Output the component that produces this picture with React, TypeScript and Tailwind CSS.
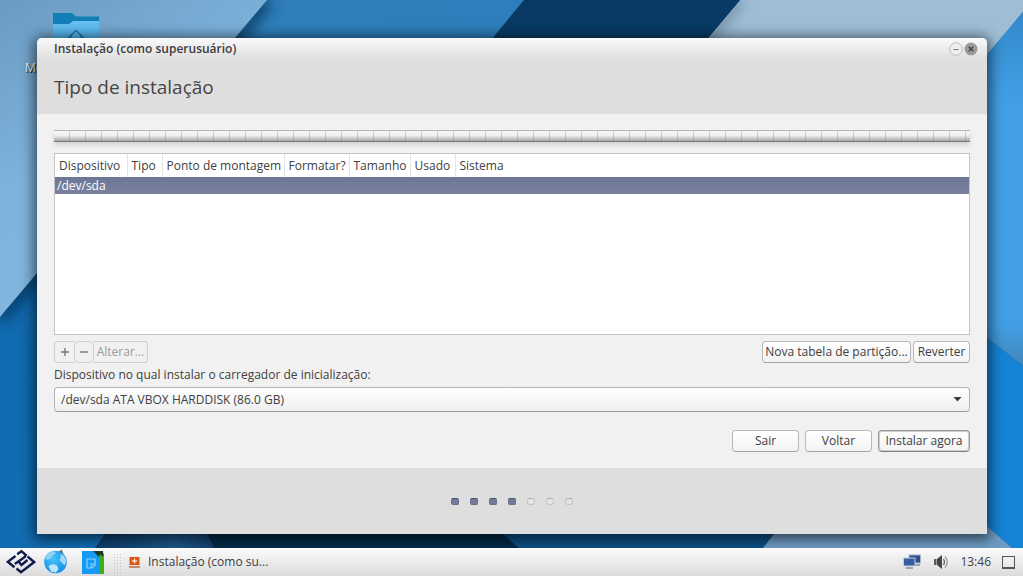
import { useState, type ReactNode } from "react";

const columns = [
  { label: "Dispositivo", width: "w-[72px]" },
  { label: "Tipo", width: "w-[35px]" },
  { label: "Ponto de montagem", width: "w-[122px]" },
  { label: "Formatar?", width: "w-[65px]" },
  { label: "Tamanho", width: "w-[61px]" },
  { label: "Usado", width: "w-[45px]" },
  { label: "Sistema", width: "w-auto" },
];

const steps = [true, true, true, true, false, false, false];

function Wallpaper() {
  return (
    <svg
      className="absolute inset-0 h-full w-full"
      viewBox="0 0 1023 548"
      preserveAspectRatio="none"
      aria-hidden="true"
    >
      <defs>
        <linearGradient id="sky" x1="0" y1="0" x2="0.5" y2="1">
          <stop offset="0" stopColor="#6b9bc2" />
          <stop offset="0.5" stopColor="#7fb3dc" />
          <stop offset="1" stopColor="#80b8e0" />
        </linearGradient>
        <linearGradient id="deep" x1="0" y1="0" x2="0" y2="1">
          <stop offset="0" stopColor="#0a5592" />
          <stop offset="0.3" stopColor="#0f69ae" />
          <stop offset="1" stopColor="#126cb2" />
        </linearGradient>
        <linearGradient id="mid" x1="0" y1="0" x2="1" y2="0">
          <stop offset="0" stopColor="#1b5b90" />
          <stop offset="0.25" stopColor="#2f7fba" />
          <stop offset="1" stopColor="#2e7ebb" />
        </linearGradient>
        <linearGradient id="bright" x1="0" y1="0" x2="0" y2="1">
          <stop offset="0" stopColor="#3389cb" />
          <stop offset="0.25" stopColor="#429fe5" />
          <stop offset="0.88" stopColor="#429fe5" />
          <stop offset="1" stopColor="#4386ba" />
        </linearGradient>
        <linearGradient id="dusk" x1="0" y1="0" x2="1" y2="0">
          <stop offset="0" stopColor="#0b3d68" />
          <stop offset="0.6" stopColor="#1d5688" />
          <stop offset="1" stopColor="#0d3a60" />
        </linearGradient>
        <filter id="soft" x="-20%" y="-20%" width="140%" height="140%">
          <feGaussianBlur stdDeviation="7" />
        </filter>
      </defs>
      <rect width="1023" height="548" fill="#0d5186" />
      <path d="M267 0H540V548H0V317Z" fill="url(#mid)" />
      <path d="M0 317V548H300V0Z" fill="url(#deep)" />
      <path d="M267 0H524L300 270H40Z" fill="url(#mid)" />
      <path d="M267 0L0 317" stroke="#06304f" strokeOpacity="0.7" strokeWidth="16" filter="url(#soft)" />
      <path d="M0 0H267L0 317Z" fill="url(#sky)" />
      <path d="M524 0H740L500 285H288Z" fill="#083a63" />
      <path d="M740 0H1023V12L700 395H408Z" fill="#9fbed6" />
      <path d="M740 0L650 107" stroke="#38536a" strokeOpacity="0.6" strokeWidth="8" filter="url(#soft)" />
      <path d="M740 0L650 107L500 285L524 0Z" fill="#083a63" />
      <path d="M1023 12V366L987 338L900 300V157Z" fill="url(#bright)" />
      <path d="M1023 366V548H1012L900 450V270L987 338Z" fill="#1583d6" />
      <path d="M105 534L160 460H230L207 534L217 548H95Z" fill="url(#dusk)" />
      <path d="M200 520H490L504 534L519 548H214Z" fill="#022b47" />
      <path d="M490 520H785L763 548H519Z" fill="#0b5085" />
      <path d="M785 520H980L1012 548H763Z" fill="#6f9cc4" />
    </svg>
  );
}

function HomeFolder() {
  return (
    <div className="absolute top-3 left-[25px]">
      <svg width="46" height="40" viewBox="0 0 46 40" className="ml-7" aria-hidden="true">
        <defs>
          <linearGradient id="folder" x1="0" y1="0" x2="0" y2="1">
            <stop offset="0" stopColor="#68c1f3" />
            <stop offset="1" stopColor="#3ca6e6" />
          </linearGradient>
        </defs>
        <path d="M0 1H19L23 4.500H46V20H0Z" fill="#137db8" />
        <path d="M0 12H16L20 9H46V40H0Z" fill="url(#folder)" />
        <path d="M15 26L23 18.500L31 26M18 24V34H28V24" fill="none" stroke="#1c6fa5" strokeWidth="1.200" />
      </svg>
      <span className="mt-2 block text-[12px] leading-4 text-white [text-shadow:1px_1px_1px_#000]">Me</span>
    </div>
  );
}

function PushButton({ children, className = "" }: { children: ReactNode; className?: string }) {
  return (
    <button
      type="button"
      className={`h-[22px] rounded-[4px] border bg-linear-to-b from-white to-[#f3f3f3] text-center leading-4 whitespace-nowrap ${className}`}
    >
      {children}
    </button>
  );
}

function TitleBar() {
  return (
    <div className="flex h-[22px] items-center justify-between bg-linear-to-b from-[#fafafa] to-[#dedede] pr-[9px] pl-[17px]">
      <h1 className="text-[12px] leading-4 font-semibold text-[#3c3c3c]">Instalação (como superusuário)</h1>
      <div className="flex gap-px">
        <button type="button" aria-label="Minimizar" className="size-[14px]">
          <svg viewBox="0 0 14 14" className="size-[14px]">
            <circle cx="7" cy="7" r="6.300" fill="#f0efed" stroke="#bdbbb7" />
            <path d="M4.500 7.500H9.500" stroke="#777" />
          </svg>
        </button>
        <button type="button" aria-label="Fechar" className="size-[14px]">
          <svg viewBox="0 0 14 14" className="size-[14px]">
            <circle cx="7" cy="7" r="6.500" fill="#9b9b9b" />
            <path d="M4.700 4.700L9.300 9.300M9.300 4.700L4.700 9.300" stroke="#444" strokeWidth="1.300" />
          </svg>
        </button>
      </div>
    </div>
  );
}

function DeviceTable() {
  return (
    <div className="mt-[11px] min-h-[160px] flex-1 border border-[#c4c4c4] bg-white">
      <table className="w-full table-fixed border-collapse text-left">
        <thead>
          <tr className="h-[23px]">
            {columns.map((c) => (
              <th
                key={c.label}
                scope="col"
                className={`${c.width} border-r border-[#e4e4e4] pl-1 font-normal whitespace-nowrap last:border-r-0`}
              >
                {c.label}
              </th>
            ))}
          </tr>
        </thead>
        <tbody>
          <tr className="h-[17px] bg-linear-to-b from-[#6c7593] to-[#7a82a0] text-white">
            <td colSpan={7} className="pl-0.5 leading-4">
              /dev/sda
            </td>
          </tr>
        </tbody>
      </table>
    </div>
  );
}

function InstallerWindow() {
  const [device, setDevice] = useState("sda");
  return (
    <main className="relative mt-[38px] mr-9 mb-[14px] ml-[37px] flex flex-1 flex-col overflow-hidden rounded-t-[5px] bg-[#f1f1f1] shadow-[0_2px_14px_3px_rgba(0,0,0,0.6)]">
      <TitleBar />
      <header className="flex h-[54px] items-center bg-[#dedede] px-[17px]">
        <h2 className="text-[19px] leading-7 text-[#454545]">Tipo de instalação</h2>
      </header>

      <section className="flex flex-1 flex-col px-[17px] pt-4 pb-4">
        <div
          role="img"
          aria-label="Espaço em disco"
          className="h-3 border-t border-b border-t-[#b5b5b5] border-b-[#777] bg-[repeating-linear-gradient(90deg,transparent_0_15px,rgba(0,0,0,0.14)_15px_16px),linear-gradient(180deg,#f6f6f6_0%,#eeeeee_45%,#a8a8a8_100%)] shadow-[0_3px_4px_rgba(0,0,0,0.12)]"
        />

        <DeviceTable />

        <div className="mt-1.5 flex justify-between">
          <div className="flex text-[#9b9b9b]">
            <button
              type="button"
              disabled
              aria-label="Adicionar"
              className="flex h-[22px] w-5 items-center justify-center rounded-l-[4px] border border-r-0 border-[#cfcfcf]"
            >
              <svg width="10" height="10" viewBox="0 0 10 10">
                <path d="M5 1V9M1 5H9" stroke="#777" strokeWidth="1.400" />
              </svg>
            </button>
            <button
              type="button"
              disabled
              aria-label="Remover"
              className="flex h-[22px] w-5 items-center justify-center rounded-[4px] border border-[#cfcfcf]"
            >
              <svg width="10" height="10" viewBox="0 0 10 10">
                <path d="M1 5H9" stroke="#777" strokeWidth="1.400" />
              </svg>
            </button>
            <button
              type="button"
              disabled
              className="h-[22px] w-[54px] rounded-r-[4px] border border-l-0 border-[#cfcfcf] leading-4"
            >
              Alterar...
            </button>
          </div>
          <div className="flex gap-0.5">
            <PushButton className="w-[149px] border-[#b9b9b9] border-b-[#a3a3a3]">Nova tabela de partição...</PushButton>
            <PushButton className="w-[57px] border-[#b9b9b9] border-b-[#a3a3a3]">Reverter</PushButton>
          </div>
        </div>

        <label htmlFor="bootloader" className="mt-1 leading-4">
          Dispositivo no qual instalar o carregador de inicialização:
        </label>
        <div className="mt-1 grid">
          <select
            id="bootloader"
            value={device}
            onChange={(e) => setDevice(e.target.value)}
            className="col-start-1 row-start-1 h-[25px] appearance-none rounded-[4px] border border-[#b4b4b4] border-b-[#999] bg-linear-to-b from-white to-[#efefef] px-1.5 leading-4"
          >
            <option value="sda">/dev/sda ATA VBOX HARDDISK (86.0 GB)</option>
          </select>
          <svg
            width="9"
            height="5"
            viewBox="0 0 9 5"
            className="pointer-events-none col-start-1 row-start-1 mr-2 self-center justify-self-end"
          >
            <path d="M0.500 0H8.500L4.500 4.500Z" fill="#3c3c3c" />
          </svg>
        </div>

        <div className="mt-[18px] flex justify-end gap-1.5">
          <PushButton className="w-[67px] border-[#b9b9b9] border-b-[#a3a3a3]">Sair</PushButton>
          <PushButton className="w-[67px] border-[#b9b9b9] border-b-[#a3a3a3]">Voltar</PushButton>
          <PushButton className="w-[92px] border-[#999] border-b-[#808080] shadow-[inset_0_0_0_1px_#cccccc]">
            Instalar agora
          </PushButton>
        </div>
      </section>

      <footer className="flex h-[66px] items-center justify-center gap-[11px] bg-[#dedede]">
        {steps.map((done, i) => (
          <span
            key={i}
            className={
              done
                ? "h-[7px] w-2 rounded-[2px] border border-[#6a718c] border-t-[#4a516c] bg-[#737a98]"
                : "h-[7px] w-2 rounded-[3px] border border-[#c4c4c4] border-t-[#aeaeae] bg-[#e4e4e4]"
            }
          />
        ))}
      </footer>
    </main>
  );
}

function Taskbar() {
  return (
    <nav className="relative flex h-7 items-center bg-linear-to-b from-[#fbfbfb] to-[#dcdcdc] px-1.5">
      <button type="button" aria-label="Menu" className="w-[30px]">
        <svg width="30" height="26" viewBox="0 0 30 26" fill="none" stroke="#121b4d" strokeWidth="2.400">
          <path d="M9.500 7L1.800 12.800L8.500 18.200" />
          <path d="M11.200 5.200L15.500 2.200L19.800 6L18.500 8.200L8.800 15" />
          <path d="M12.500 12.500L15.500 16L21.500 11" />
          <path d="M21.500 7.500L28.200 13L15 23.200L10.500 19.500" />
        </svg>
      </button>
      <button type="button" aria-label="Navegador" className="ml-2 w-6">
        <svg width="24" height="26" viewBox="0 0 24 26">
          <defs>
            <radialGradient id="globe" cx="0.4" cy="0.35" r="0.7">
              <stop offset="0" stopColor="#45c4fb" />
              <stop offset="1" stopColor="#168be8" />
            </radialGradient>
          </defs>
          <circle cx="11.500" cy="13" r="11.300" fill="url(#globe)" />
          <path d="M6 3.200L10 2L12 4.500L9 6.500L7 9L4 11L1.500 10Q2 6 6 3.200Z" fill="#8ad4f8" />
          <path d="M16 5L20 7L22.500 12L20.500 16.500L18.500 14.500L15.500 11L17 8Z" fill="#a5daf6" />
          <path d="M4.500 17L9 15L13 16.500L14.500 20L12 23.500L7 22.500Z" fill="#bfe4f6" />
          <path d="M15 2.800L17.500 0.500L19.500 4.500Z" fill="#59666f" />
        </svg>
      </button>
      <button type="button" aria-label="Arquivos" className="ml-[13px] w-6">
        <svg width="24" height="24" viewBox="0 0 24 24">
          <path d="M16 3H23V24H14Z" fill="#3fae19" />
          <path d="M1 1H13L18 6V24H1Z" fill="#159bf5" />
          <path d="M12 1H22V7L19 4L18 7L14 3Z" fill="#213a22" />
          <path d="M6 9H14V15L11 18H6ZM14 14H10V18" fill="none" stroke="#8ed4fb" strokeWidth="1.200" />
        </svg>
      </button>
      <svg width="8" height="24" viewBox="0 0 8 24" className="ml-2 self-end" aria-hidden="true">
        <path d="M1.500 2V24M4.500 2V24M7.500 2V24" stroke="#c4c4c4" strokeDasharray="1 2" />
      </svg>
      <button type="button" className="ml-2 flex items-center gap-2 leading-4">
        <svg width="11" height="13" viewBox="0 0 11 13" aria-hidden="true">
          <rect x="0.500" y="1" width="10" height="8" rx="0.500" fill="#dc5713" />
          <path d="M5.500 2.500V7.500M3 5H8" stroke="#fbe2d2" strokeWidth="1.300" />
          <path d="M0 11H11" stroke="#c36a45" strokeWidth="1.500" />
        </svg>
        Instalação (como su...
      </button>

      <div className="ml-auto flex items-center">
        <svg width="18" height="16" viewBox="0 0 18 16" role="img" aria-label="Rede">
          <rect x="6" y="1" width="11.500" height="8" fill="#2c518f" stroke="#aab4c4" />
          <path d="M12 11H17" stroke="#9ba4b0" strokeWidth="2" />
          <rect x="0.500" y="4" width="11.500" height="8" fill="#375e9f" stroke="#c6cdd8" />
          <path d="M3 14H10" stroke="#9ba4b0" strokeWidth="2" />
        </svg>
        <svg width="16" height="16" viewBox="0 0 16 16" role="img" aria-label="Volume" className="ml-3">
          <path d="M1 5H3.500V11H1Z" fill="#5a5a5a" />
          <path d="M4 5L9 1V15L4 11Z" fill="#454545" />
          <path d="M10.500 5Q12.500 8 10.500 11" fill="none" stroke="#666" strokeWidth="1.300" />
          <path d="M12 2.500Q16.500 8 12 13.500" fill="none" stroke="#999" strokeWidth="1.300" />
        </svg>
        <time className="ml-[11px] leading-4">13:46</time>
        <button
          type="button"
          aria-label="Mostrar área de trabalho"
          className="mr-0.5 ml-[11px] size-[13px] border border-b-2 border-[#555]"
        />
      </div>
    </nav>
  );
}

export default function App() {
  return (
    <div className="flex min-h-screen flex-col bg-[#0d5186] font-['Open_Sans','Noto_Sans',sans-serif] text-[12px] text-[#404040]">
      <div className="relative flex flex-1 flex-col overflow-hidden">
        <Wallpaper />
        <HomeFolder />
        <InstallerWindow />
      </div>
      <Taskbar />
    </div>
  );
}
